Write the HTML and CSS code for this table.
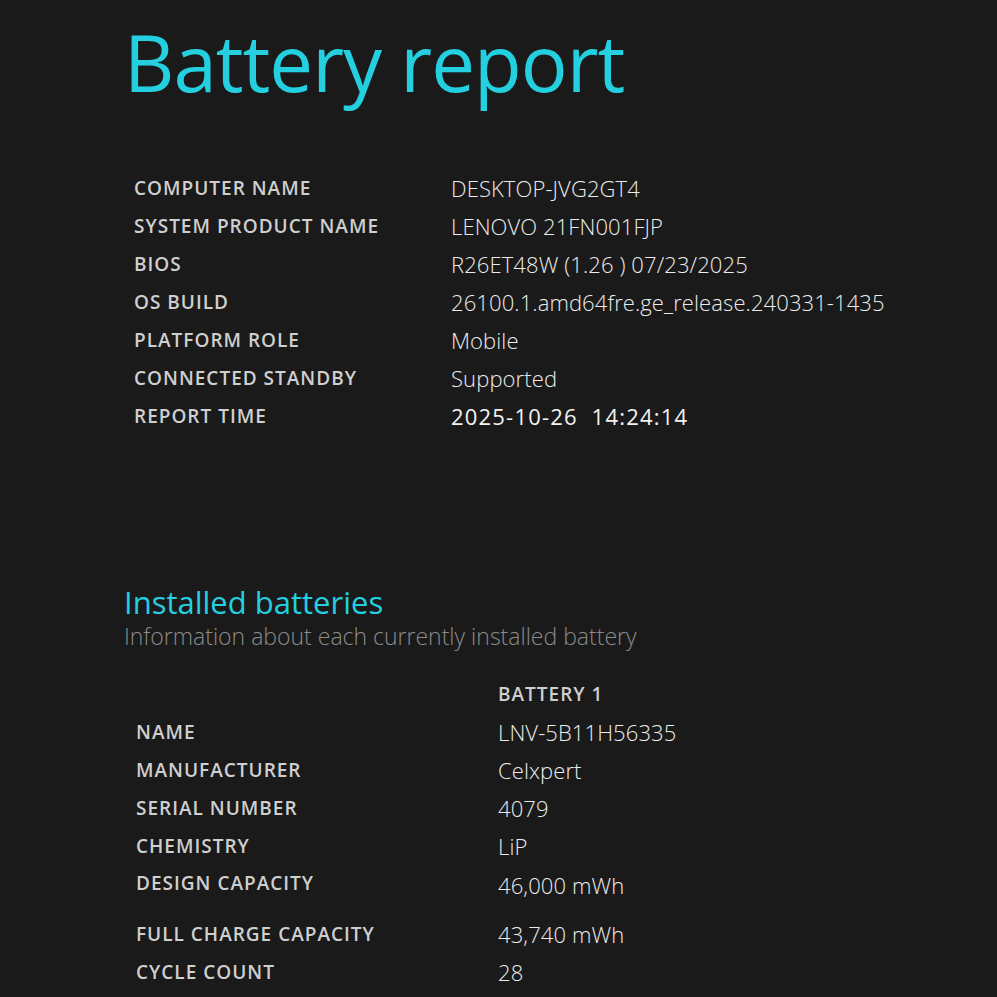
FILE: index.html
```html
<!DOCTYPE html>
<html>
<head>
<meta charset="utf-8">
<link rel="stylesheet" href="styles.css">
</head>
<body>
<main class="page">
  <h1 class="title">Battery report</h1>
  <table class="info">
    <tr><td class="label">COMPUTER NAME</td><td class="value">DESKTOP-JVG2GT4</td></tr>
    <tr><td class="label">SYSTEM PRODUCT NAME</td><td class="value">LENOVO 21FN001FJP</td></tr>
    <tr><td class="label">BIOS</td><td class="value">R26ET48W (1.26 ) 07/23/2025</td></tr>
    <tr><td class="label">OS BUILD</td><td class="value">26100.1.amd64fre.ge_release.240331-1435</td></tr>
    <tr><td class="label">PLATFORM ROLE</td><td class="value">Mobile</td></tr>
    <tr><td class="label">CONNECTED STANDBY</td><td class="value">Supported</td></tr>
    <tr><td class="label">REPORT TIME</td><td class="value strong">2025-10-26&nbsp; 14:24:14</td></tr>
  </table>

  <h2 class="section">Installed batteries</h2>
  <div class="subtitle">Information about each currently installed battery</div>

  <table class="batt">
    <tr><td class="label"></td><td class="colhead">BATTERY 1</td></tr>
    <tr><td class="label">NAME</td><td class="value">LNV-5B11H56335</td></tr>
    <tr><td class="label">MANUFACTURER</td><td class="value">Celxpert</td></tr>
    <tr><td class="label">SERIAL NUMBER</td><td class="value">4079</td></tr>
    <tr><td class="label">CHEMISTRY</td><td class="value">LiP</td></tr>
    <tr class="spaced"><td class="label">DESIGN CAPACITY</td><td class="value">46,000 mWh</td></tr>
    <tr><td class="label">FULL CHARGE CAPACITY</td><td class="value">43,740 mWh</td></tr>
    <tr><td class="label">CYCLE COUNT</td><td class="value">28</td></tr>
  </table>
</main>
</body>
</html>
```
FILE: styles.css
```css
html, body {
  margin: 0;
  background: #1a1a1a;
}
body {
  font-family: "Open Sans", "Noto Sans", sans-serif;
  color: #e6e6e6;
}
.page {
  padding: 14px 0 0 124px;
}
.title {
  margin: 0;
  font-size: 78px;
  font-weight: 400;
  color: #24cfe0;
  line-height: 96px;
  letter-spacing: -1px;
}
table {
  border-collapse: collapse;
}
td {
  padding: 0;
  height: 38px;
  vertical-align: middle;
  white-space: nowrap;
}
.info {
  margin: 59px 0 0 10px;
}
.info .label {
  width: 317px;
}
.label {
  font-size: 19px;
  font-weight: 600;
  color: #cfcfcf;
  letter-spacing: 1px;
}
.value {
  font-size: 22px;
  font-weight: 300;
  color: #ececec;
  letter-spacing: 0.1px;
}
.value.strong {
  font-weight: 500;
  letter-spacing: 1.2px;
  color: #f2f2f2;
}
.section {
  margin: 148px 0 0 0;
  font-size: 31px;
  font-weight: 500;
  color: #24cfe0;
  line-height: 38px;
}
.subtitle {
  font-size: 23px;
  font-weight: 300;
  color: #8a8a8a;
  line-height: 31px;
}
.batt {
  margin: 23px 0 0 12px;
}
.batt .label {
  width: 362px;
}
.colhead {
  font-size: 19px;
  font-weight: 600;
  color: #cfcfcf;
  letter-spacing: 1px;
}
.batt tr.spaced td {
  vertical-align: top;
  padding-top: 5px;
  height: 45px;
}
```
